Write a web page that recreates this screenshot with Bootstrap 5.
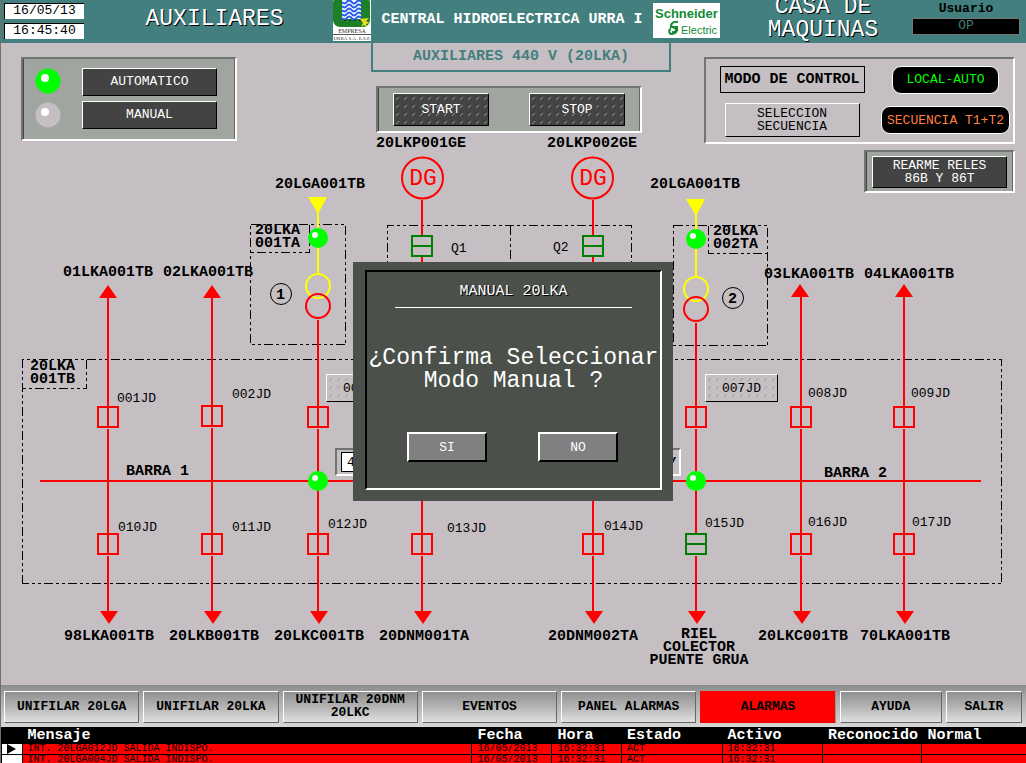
<!DOCTYPE html>
<html lang="es">
<head>
<meta charset="utf-8">
<meta name="viewport" content="width=device-width, initial-scale=1">
<title>Auxiliares 440 V (20LKA)</title>
<link href="https://cdn.jsdelivr.net/npm/bootstrap@5.3.0/dist/css/bootstrap.min.css" rel="stylesheet">
<style>
  :root { --teal: #437f7f; --plate: #c5bfc3; --panel: #a1a5a0; --edge: #71756f; }
  body { font-family: "Liberation Mono", monospace; font-size: 13px; line-height: 13px; color: #000; background: var(--plate); border-left: 1px solid #77705f; }
  button { font: inherit; color: inherit; padding: 0; border-radius: 0; }
  .t-wide { font-size: 15px; line-height: 16px; }
  .t-big { font-size: 23px; line-height: 23px; }
  .shade-text { color: #fff; text-shadow: 1px 1px 0 #000; }

  .top-bar { display: grid; grid-template-columns: 95px 237fr 38px 282fr 81px 178fr 114px; height: 43px; background: var(--teal); overflow: hidden; }
  .clocks { padding: 3px; }
  .clock { width: 80px; height: 16px; background: #fff; border: 1px solid #000; border-right: 0; border-bottom: 0; line-height: 14px; text-align: center; }
  .user { gap: 3px; padding: 2px 6px 0 0; }
  .user-box { width: 108px; height: 17px; background: #000; color: var(--teal); border: 1px solid #777; line-height: 14px; text-align: center; }
  .place { margin-top: -4px; }

  .stage { display: grid; }
  .stage > * { grid-area: 1 / 1; }
  .stage svg.mimic { display: block; width: 100%; height: auto; }
  .controls { display: grid; grid-template-columns: 370fr 300fr 355fr; align-items: start; align-self: start; }
  .subtitle { height: 29px; border: 2px solid var(--teal); border-top: 0; color: var(--teal); line-height: 28px; font-size: 15px; font-weight: 600; }
  .sunk { border: 2px solid; border-color: var(--edge) #fff #fff var(--edge); }
  .sunk.solid { background: var(--panel); box-shadow: inset 1px 0 0 #444, inset -1px 0 0 #666; }
  .mode-panel { width: 216px; height: 84px; margin: 14px 0 0 20px; padding: 0 18px 2px 8px; }
  .mode-keys { gap: 5px; }
  .run-panel { width: 266px; height: 47px; margin: 14px 0 0 5px; padding: 0 15px; }
  .side { gap: 6px; margin: 14px 11px 0 0; }
  .ctl-panel { width: 311px; height: 87px; display: grid; grid-template-columns: 172fr 135fr; place-items: center; padding-top: 2px; }
  .reset-panel { width: 151px; height: 43px; }
  .key { width: 135px; height: 28px; border: 1px solid; border-color: #fff #000 #000 #fff; background: #434343; color: #fff; }
  .key.tall { height: 34px; }
  .key.short { height: 32px; }
  .key.plain { background: transparent; color: #000; }
  .key.slim { width: 96px; height: 33px; }
  .hatch { background-image: url("data:image/svg+xml,%3Csvg xmlns='http://www.w3.org/2000/svg' width='8' height='8'%3E%3Cpath d='M2 6L5 3' stroke='%23999' stroke-width='1'/%3E%3C/svg%3E"); }
  .tagbox { width: 145px; height: 27px; border: 1px solid #000; }
  .pill { height: 28px; border: 1px solid #fff; border-radius: 9px; background: #000; padding: 0 5px; }
  .pill.lit { padding: 0 13px; }
  .lit { color: #0f0; } .amber { color: #ff7f40; }
  .feed { position: absolute; top: 331px; width: 73px; height: 28px; border: 1px solid; border-color: #fff #000 #000 #fff; background-color: var(--plate); }
  .feed-a { left: 325px; } .feed-b { left: 704px; }
  .gauge { position: absolute; left: 334px; top: 405px; width: 346px; height: 28px; background: var(--plate); }
  .gauge input { width: 60px; height: 20px; border: 1px solid #000; background: #fff; font: inherit; padding: 0 5px; }

  .mimic text { font-family: "Liberation Mono", monospace; font-size: 13px; }
  .mimic .name { font-size: 15px; font-weight: 700; }
  .mimic .gen { font-size: 23px; }
  .wire { fill: none; stroke: red; stroke-width: 2; }
  .gold { fill: none; stroke: #ff0; stroke-width: 2; }
  .zone { fill: none; stroke: #000; stroke-width: 1; stroke-dasharray: 9 3 3 3 3 3; shape-rendering: crispEdges; }

  .nav-keys { display: grid; grid-template-columns: repeat(6, 135fr) 102fr 76fr; gap: 4px; height: 42px; padding: 6px 4px 4px 3px; background: linear-gradient(#8b8b8b, #a8a8a8 30%, #d8d8d8); }
  .nav-keys button { font-weight: 700; border: 1px solid; border-color: #fff #666 #666 #fff; background: linear-gradient(#909090, #b4b4b4 50%, #e0e0e0); padding-bottom: 2px; }
  .nav-keys .on { background: red; border-color: red #999 red red; }

  .log { height: 36px; overflow: hidden; background: #000; }
  .log table { width: 100%; table-layout: fixed; border-collapse: separate; border-spacing: 0; }
  .log th { color: #fff; font-size: 15px; line-height: 17px; height: 17px; padding: 0 0 0 6px; white-space: nowrap; }
  .log td { background: red; font-size: 10px; line-height: 10px; height: 11px; padding: 0 0 0 5px; border-left: 1px solid #000; border-bottom: 1px solid #000; white-space: nowrap; }
  .log td.mark-cell { background: #fff; padding: 0; }
  .log svg { display: block; margin-left: 5px; }

  .ask { width: 320px; height: 239px; background: #4b504b; padding: 8px 11px 11px 12px; color: #fff; z-index: 5; inset: 0; margin: auto; }
  .ask-in { height: 100%; border: 2px solid; border-color: #000 #fff #fff #000; padding-top: 12px; }
  .ask-in hr { width: 237px; margin: 7px auto 39px; border-top: 1px solid #fff; opacity: 1; }
  .ask-in p { white-space: nowrap; }
  .ask-keys { gap: 51px; margin: 39px 2px 0 0; }
  .ask-in button { width: 80px; height: 30px; border: 2px solid; border-color: #fff #000 #000 #fff; background: #808080; color: #fff; }
</style>
</head>
<body class="d-flex flex-column min-vh-100 overflow-hidden">

<header class="top-bar">
  <div class="clocks d-flex flex-column gap-1">
    <div class="clock">16/05/13</div>
    <div class="clock">16:45:40</div>
  </div>
  <h1 class="t-big fw-normal shade-text text-center m-0 pt-2">AUXILIARES</h1>
  <svg width="38" height="41" viewBox="0 0 38 41" role="img" aria-label="Empresa Urra">
    <rect width="38" height="41" fill="#fff"/>
    <rect y="-4" width="37" height="31" rx="7" fill="#1c8026"/>
    <path d="M9 0h19v19H9z" fill="#f4f8ff"/>
    <path d="M9 2q2.400 3 4.800 0t4.800 0t4.800 0t4.800 0M9 6q2.400 3 4.800 0t4.800 0t4.800 0t4.800 0M9 10q2.400 3 4.800 0t4.800 0t4.800 0t4.800 0M9 14q2.400 3 4.800 0t4.800 0t4.800 0t4.800 0M9 18q2.400 3 4.800 0t4.800 0t4.800 0t4.800 0" fill="none" stroke="#2458e8" stroke-width="2"/>
    <path d="M11 20.500h17" stroke="#123a12" stroke-dasharray="2 3"/>
    <path d="M27 19l9-1-3 3 4 2-4 1 1 3-3-2-3 2 2-4z" fill="#e8e020"/>
    <text x="19" y="33" text-anchor="middle" font-family="Liberation Serif, serif" font-size="6" fill="#333">EMPRESA</text>
    <path d="M0 34.500h38" stroke="#555"/>
    <text x="19" y="40" text-anchor="middle" font-family="Liberation Serif, serif" font-size="5" fill="#333">URRÁ S.A. E.S.P.</text>
  </svg>
  <div class="t-wide fw-bold text-white text-center pt-2 mt-1 text-nowrap">CENTRAL HIDROELECTRICA URRA I</div>
  <svg width="67" height="38" viewBox="0 0 67 38" role="img" aria-label="Schneider Electric">
    <rect y="3" width="67" height="35" fill="#fff"/>
    <g fill="#128a35">
      <text x="2" y="18" font-family="Liberation Sans, sans-serif" font-weight="700" font-size="13">Schneider</text>
      <text x="28" y="34" font-family="Liberation Sans, sans-serif" font-size="11">Electric</text>
    </g>
    <path d="M25 22c-6-1-8 3-6 5l3 1c2 1 1 5-3 4M18 29c-2 0-3 5 1 5 4 0 6-4 5-7M17 27h8" fill="none" stroke="#128a35" stroke-width="2"/>
  </svg>
  <div class="place t-big shade-text text-center">CASA DE<br>MAQUINAS</div>
  <div class="user d-flex flex-column align-items-center"><b>Usuario</b><div class="user-box">OP</div></div>
</header>

<main class="stage position-relative flex-grow-1">
  <svg class="mimic" viewBox="1 43 1025 642" role="img" aria-label="Diagrama unifilar 20LKA">
    <defs>
      <g id="closed"><rect x="-10" y="-10" width="20" height="20" class="wire"/></g>
      <g id="open"><rect x="-10" y="-10" width="20" height="20" fill="#c5bfc3" stroke="#008000" stroke-width="2"/><path d="M-10 0H10" stroke="#008000" stroke-width="2"/></g>
      <path id="up" d="M0 0L9 13H-9z" fill="red"/>
      <path id="down" d="M-8 0H10L1 13z" fill="red"/>
      <g id="ball"><circle r="10" fill="#0f0"/><circle cx="-3" cy="-3" r="3" fill="#fff"/></g>
      <path id="inlet" d="M-10 0H9L0 17z" fill="#ff0"/>
    </defs>
    <g class="zone">
      <path d="M22.500 583.500V359.500H1001.500V583.500z"/>
      <path d="M86.500 359.500V388.500H22.500"/>
      <path d="M250.500 224.500H345.500V344.500H250.500z"/>
      <path d="M309.500 224.500V252.500H250.500"/>
      <path d="M387.500 300V225.500H631.500V300M510.500 225.500V300"/>
      <path d="M673.500 225.500H767.500V345.500H673.500z"/>
      <path d="M708.500 225.500V253.500H767.500"/>
    </g>
    <g class="wire">
      <path d="M40 481H981"/>
      <path d="M108 297V428M108 429V554M108 556V612M212 297V427M212 428V554M212 556V612"/>
      <path d="M318 320V428M318 429V554M318 556V612M696 323V428M696 429V534M696 556V612"/>
      <path d="M422 200V554M422 556V612M593 200V554M593 556V612"/>
      <path d="M801 296V428M801 429V554M801 556V612M904 296V428M904 429V554M904 556V612"/>
    </g>
    <g class="gold">
      <path d="M318 213V274M696 215V277"/>
      <circle cx="318" cy="286" r="12"/><circle cx="696" cy="289" r="12"/>
    </g>
    <g class="wire">
      <circle cx="318" cy="306" r="12"/><circle cx="696" cy="309" r="12"/>
      <circle cx="422.500" cy="178" r="20.500"/><circle cx="592.500" cy="178" r="20.500"/>
    </g>
    <g fill="none" stroke="#000"><circle cx="281" cy="294" r="10.500"/><circle cx="733" cy="298" r="10.500"/></g>
    <use href="#inlet" x="318" y="197"/><use href="#inlet" x="696" y="199"/>
    <use href="#ball" x="318" y="238"/><use href="#ball" x="696" y="239"/><use href="#ball" x="318" y="481"/><use href="#ball" x="696" y="481"/>
    <use href="#up" x="108" y="285"/><use href="#up" x="212" y="285"/><use href="#up" x="800" y="284"/><use href="#up" x="904" y="284"/>
    <use href="#down" x="108" y="611"/><use href="#down" x="212" y="611"/><use href="#down" x="318" y="611"/><use href="#down" x="422" y="611"/><use href="#down" x="593" y="611"/><use href="#down" x="696" y="611"/><use href="#down" x="801" y="611"/><use href="#down" x="904" y="611"/>
    <use href="#closed" x="108" y="417"/><use href="#closed" x="212" y="416"/><use href="#closed" x="318" y="417"/><use href="#closed" x="696" y="417"/><use href="#closed" x="801" y="417"/><use href="#closed" x="904" y="417"/>
    <use href="#closed" x="108" y="544"/><use href="#closed" x="212" y="544"/><use href="#closed" x="318" y="544"/><use href="#closed" x="422" y="544"/><use href="#closed" x="593" y="544"/><use href="#open" x="696" y="544"/><use href="#closed" x="801" y="544"/><use href="#closed" x="904" y="544"/>
    <use href="#open" x="422" y="246"/><use href="#open" x="593" y="246"/>

    <g fill="red" text-anchor="middle"><text class="gen" x="423" y="185">DG</text><text class="gen" x="593" y="185">DG</text></g>
    <g>
      <text class="name" x="376" y="147">20LKP001GE</text><text class="name" x="547" y="147">20LKP002GE</text>
      <text class="name" x="275" y="188">20LGA001TB</text><text class="name" x="650" y="188">20LGA001TB</text>
      <text class="name" x="255" y="234">20LKA</text><text class="name" x="255" y="247">001TA</text>
      <text class="name" x="713" y="235">20LKA</text><text class="name" x="713" y="248">002TA</text>
      <text class="name" x="30" y="370">20LKA</text><text class="name" x="30" y="383">001TB</text>
      <text class="name" x="63" y="276">01LKA001TB</text><text class="name" x="163" y="276">02LKA001TB</text>
      <text class="name" x="764" y="278">03LKA001TB</text><text class="name" x="864" y="278">04LKA001TB</text>
      <text class="name" x="276" y="299">1</text><text class="name" x="728" y="303">2</text>
      <text class="name" x="126" y="475">BARRA 1</text><text class="name" x="824" y="477">BARRA 2</text>
      <text class="name" x="64" y="640">98LKA001TB</text><text class="name" x="169" y="640">20LKB001TB</text>
      <text class="name" x="274" y="640">20LKC001TB</text><text class="name" x="379" y="640">20DNM001TA</text>
      <text class="name" x="548" y="640">20DNM002TA</text><text class="name" x="758" y="640">20LKC001TB</text>
      <text class="name" x="860" y="640">70LKA001TB</text>
    </g>
    <g text-anchor="middle"><text class="name" x="699" y="638">RIEL</text><text class="name" x="699" y="651">COLECTOR</text><text class="name" x="699" y="664">PUENTE GRUA</text></g>
    <g>
      <text x="451" y="252">Q1</text><text x="553" y="251">Q2</text>
      <text x="117" y="402">001JD</text><text x="232" y="398">002JD</text><text x="808" y="397">008JD</text><text x="911" y="397">009JD</text>
      <text x="118" y="531">010JD</text><text x="232" y="531">011JD</text><text x="328" y="528">012JD</text><text x="447" y="532">013JD</text>
      <text x="604" y="530">014JD</text><text x="705" y="527">015JD</text><text x="808" y="526">016JD</text><text x="912" y="526">017JD</text>
    </g>
  </svg>

  <section class="controls">
    <div class="sunk solid mode-panel d-flex align-items-center justify-content-between">
      <svg width="34" height="64" viewBox="0 0 34 64" aria-hidden="true"><circle cx="17" cy="15" r="12.500" fill="#0f0"/><circle cx="14" cy="12" r="4" fill="#fff"/><circle cx="17" cy="49" r="12.500" fill="#c5bfc3"/><circle cx="14" cy="46" r="4" fill="#fff"/></svg>
      <div class="mode-keys d-flex flex-column"><button class="key" type="button">AUTOMATICO</button><button class="key" type="button">MANUAL</button></div>
    </div>
    <div>
      <h2 class="subtitle text-center m-0">AUXILIARES 440 V (20LKA)</h2>
      <div class="run-panel sunk solid d-flex align-items-center justify-content-between">
        <button class="key slim hatch" type="button">START</button>
        <button class="key slim hatch" type="button">STOP</button>
      </div>
    </div>
    <div class="side d-flex flex-column align-items-end">
      <div class="ctl-panel sunk">
        <div class="tagbox t-wide fw-bold d-flex align-items-center justify-content-center">MODO DE CONTROL</div>
        <div class="pill lit d-flex align-items-center">LOCAL-AUTO</div>
        <button class="key tall plain" type="button">SELECCION<br>SECUENCIA</button>
        <div class="pill amber d-flex align-items-center">SECUENCIA T1+T2</div>
      </div>
      <div class="reset-panel sunk solid d-flex align-items-center justify-content-center"><button class="key short" type="button">REARME RELES<br>86B Y 86T</button></div>
    </div>
  </section>

  <button class="feed feed-a hatch" type="button">006JD</button>
  <button class="feed feed-b hatch" type="button">007JD</button>
  <div class="gauge sunk d-flex align-items-center justify-content-between ps-1"><input aria-label="Tension de barra" value="440" readonly><b class="fst-italic pe-1">V</b></div>
</main>

<nav class="nav-keys" aria-label="Pantallas">
  <button type="button">UNIFILAR 20LGA</button>
  <button type="button">UNIFILAR 20LKA</button>
  <button type="button">UNIFILAR 20DNM<br>20LKC</button>
  <button type="button">EVENTOS</button>
  <button type="button">PANEL ALARMAS</button>
  <button type="button" class="on">ALARMAS</button>
  <button type="button">AYUDA</button>
  <button type="button">SALIR</button>
</nav>

<section class="log">
  <table>
    <colgroup><col style="width:2%"><col style="width:43.900%"><col style="width:7.800%"><col style="width:6.800%"><col style="width:9.800%"><col style="width:9.800%"><col style="width:9.700%"><col></colgroup>
    <thead><tr><th></th><th>Mensaje</th><th>Fecha</th><th>Hora</th><th>Estado</th><th>Activo</th><th>Reconocido</th><th>Normal</th></tr></thead>
    <tbody>
      <tr><td class="mark-cell"><svg width="10" height="10" viewBox="0 0 10 10"><path d="M0 0L9 5L0 10z"/></svg></td><td>INT. 20LGA012JD SALIDA INDISPO.</td><td>16/05/2013</td><td>16:32:31</td><td>ACT</td><td>16:32:31</td><td></td><td></td></tr>
      <tr><td class="mark-cell"></td><td>INT. 20LGA004JD SALIDA INDISPO.</td><td>16/05/2013</td><td>16:32:31</td><td>ACT</td><td>16:32:31</td><td></td><td></td></tr>
    </tbody>
  </table>
</section>

<div class="ask position-fixed" role="dialog" aria-labelledby="ask-title">
  <div class="ask-in text-center">
    <h2 id="ask-title" class="t-wide fw-normal shade-text m-0">MANUAL 20LKA</h2>
    <hr>
    <p class="t-big m-0">¿Confirma Seleccionar<br>Modo Manual ?</p>
    <div class="ask-keys d-flex justify-content-center"><button type="button">SI</button><button type="button">NO</button></div>
  </div>
</div>

<script src="https://cdn.jsdelivr.net/npm/bootstrap@5.3.0/dist/js/bootstrap.bundle.min.js"></script>
</body>
</html>
